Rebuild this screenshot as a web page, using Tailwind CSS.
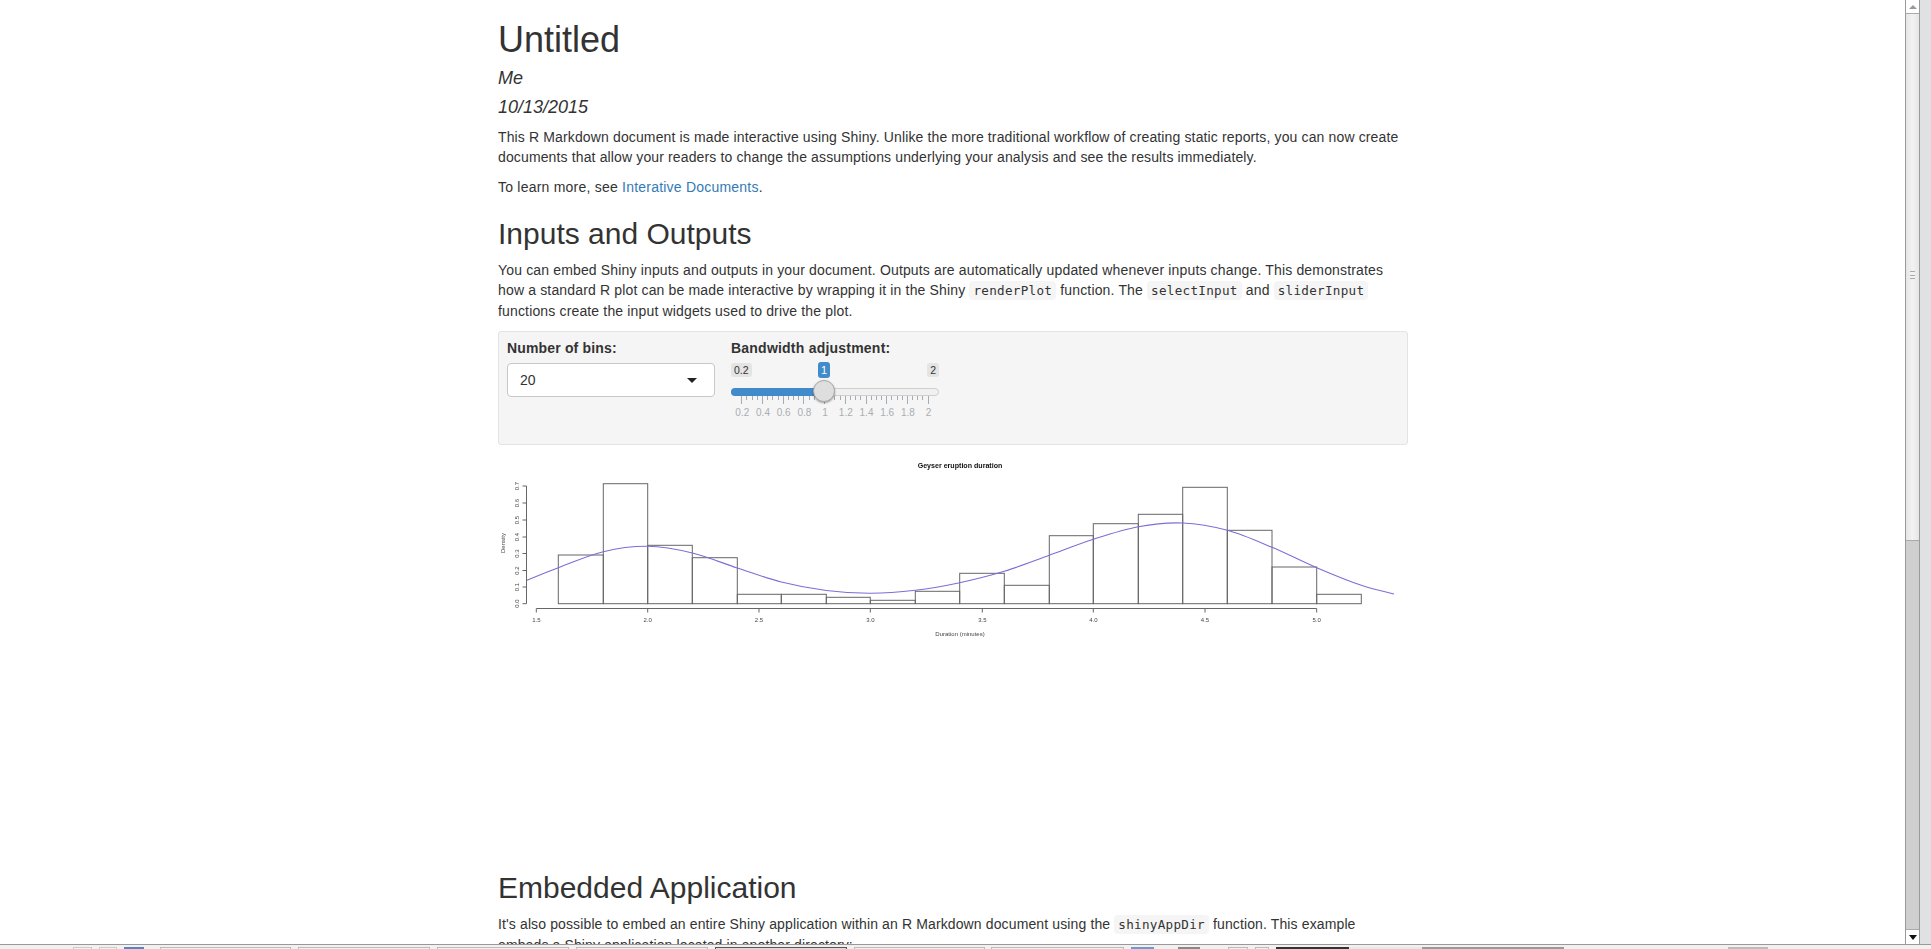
<!DOCTYPE html>
<html lang="en">
<head>
    <meta charset="UTF-8">
    <meta name="viewport" content="width=device-width, initial-scale=1.0">
    <title>Untitled</title>
    <script src="https://cdn.jsdelivr.net/npm/@tailwindcss/browser@4"></script>
</head>
<body class="h-[949px] overflow-hidden bg-white font-['Liberation_Sans',Arial,sans-serif] text-[14px] leading-[20px] text-[#333]">
    <div class="flex h-[944px]">
        <!-- document -->
        <main class="h-full w-[1905px] shrink-0 overflow-hidden pl-[498px]">
            <div class="w-[910px]">
                <h1 class="mt-5 mb-[9px] text-[36px] leading-[39.6px]">Untitled</h1>
                <h4 class="mb-[10px] text-[18px] leading-[19.8px] italic">Me</h4>
                <h4 class="mb-[9px] text-[18px] leading-[19.8px] italic">10/13/2015</h4>
                <p class="mb-[10px] tracking-[0.135px]">This R Markdown document is made interactive using Shiny. Unlike the more traditional workflow of creating static reports, you can now create documents that allow your readers to change the assumptions underlying your analysis and see the results immediately.</p>
                <p class="mb-[10px] tracking-[0.22px]">To learn more, see <a href="#" class="text-[#337ab7]">Interative Documents</a>.</p>

                <h2 class="mt-5 mb-[10px] text-[30px] leading-[33px]">Inputs and Outputs</h2>
                <p class="mb-[10px] tracking-[0.155px]">You can embed Shiny inputs and outputs in your document. Outputs are automatically updated whenever inputs change. This demonstrates how a standard R plot can be made interactive by wrapping it in the Shiny <code class="rounded bg-[#f5f5f5] px-1 py-0.5 font-['DejaVu_Sans_Mono',monospace] text-[12.6px] tracking-[0.3px]">renderPlot</code> function. The <code class="rounded bg-[#f5f5f5] px-1 py-0.5 font-['DejaVu_Sans_Mono',monospace] text-[12.6px] tracking-[0.3px]">selectInput</code> and <code class="rounded bg-[#f5f5f5] px-1 py-0.5 font-['DejaVu_Sans_Mono',monospace] text-[12.6px] tracking-[0.3px]">sliderInput</code> functions create the input widgets used to drive the plot.</p>

                <!-- input panel -->
                <div class="flex h-[114px] gap-4 rounded-[3px] border border-[#e3e3e3] bg-[#f5f5f5] px-2 pt-[6px]">
                    <div class="w-[208px]">
                        <label class="mb-[5px] block font-bold tracking-[0.16px]">Number of bins:</label>
                        <div class="flex h-[34px] items-center justify-between rounded border border-[#c8c8c8] bg-white pr-[17px] pl-3">
                            <span>20</span>
                            <span class="h-0 w-0 border-x-[5px] border-t-[5px] border-x-transparent border-t-[#222]"></span>
                        </div>
                    </div>
                    <div class="w-[208px]">
                        <label class="mb-[5px] block font-bold tracking-[0.22px]">Bandwidth adjustment:</label>
                        <div class="relative h-[54px]">
                            <span class="absolute top-0 left-0 rounded-[3px] bg-[#e4e4e4] px-[3px] text-[10.5px] leading-[14px]">0.2</span>
                            <span class="absolute top-0 right-0 rounded-[3px] bg-[#e4e4e4] px-[3px] text-[10.5px] leading-[14px]">2</span>
                            <span class="absolute top-[-1px] left-[87px] w-[12px] rounded-[3px] bg-[#428bca] text-center text-[11px] leading-[16px] text-white">1</span>
                            <div class="absolute top-[25px] h-2 w-full rounded-full border border-[#cfcfcf] bg-[#f0f0f0]"></div>
                            <div class="absolute top-[25px] h-2 w-[93px] rounded-l-full bg-[#428bca]"></div>
                            <svg class="absolute top-[32px] left-0" width="208" height="24" viewBox="731 394 208 24">
                                <g id="sliderTicks" stroke="#a4abb2" stroke-width="1"></g>
                                <g id="sliderLabels" fill="#aaaeb2" font-size="10" text-anchor="middle" font-family="Liberation Sans"></g>
                            </svg>
                            <div class="absolute top-[17px] left-[82px] h-[22px] w-[22px] rounded-full border border-[#a9a9a9] bg-[#dedede] shadow-[0_1px_2px_rgba(0,0,0,0.35)]"></div>
                        </div>
                    </div>
                </div>

                <!-- plot, drawn in page coordinates -->
                <div class="h-[406px] pt-[6px]">
                    <svg class="block blur-[0.3px]" width="910" height="200" viewBox="498 450 910 200" font-family="Liberation Sans" fill="#333">
                        <text x="960" y="466.5" text-anchor="middle" font-size="7.1" font-weight="bold" fill="#111">Geyser eruption duration</text>
                        <g id="bars" fill="none" stroke="#666" stroke-width="1"></g>
                        <path id="density" fill="none" stroke="#7b6fd6" stroke-width="1.1"></path>
                        <g stroke="#666" stroke-width="1" fill="none">
                            <path d="M536.3 607.5H1316.7M536.3 607.5v4M647.7 607.5v4M759 607.5v4M870.3 607.5v4M982.3 607.5v4M1093.3 607.5v4M1205 607.5v4M1316.7 607.5v4"></path>
                            <path d="M526.5 485V602.7M526.5 485h-4M526.5 502h-4M526.5 519h-4M526.5 536h-4M526.5 552.5h-4M526.5 569.5h-4M526.5 586h-4M526.5 602.7h-4"></path>
                        </g>
                        <g font-size="6" text-anchor="middle" fill="#444">
                            <text x="536.3" y="620.8">1.5</text>
                            <text x="647.7" y="620.8">2.0</text>
                            <text x="759" y="620.8">2.5</text>
                            <text x="870.3" y="620.8">3.0</text>
                            <text x="982.3" y="620.8">3.5</text>
                            <text x="1093.3" y="620.8">4.0</text>
                            <text x="1205" y="620.8">4.5</text>
                            <text x="1316.7" y="620.8">5.0</text>
                            <text x="960" y="634.8">Duration (minutes)</text>
                            <text transform="translate(518.8 602.7) rotate(-90)">0.0</text>
                            <text transform="translate(518.8 586) rotate(-90)">0.1</text>
                            <text transform="translate(518.8 569.5) rotate(-90)">0.2</text>
                            <text transform="translate(518.8 552.5) rotate(-90)">0.3</text>
                            <text transform="translate(518.8 536) rotate(-90)">0.4</text>
                            <text transform="translate(518.8 519) rotate(-90)">0.5</text>
                            <text transform="translate(518.8 502) rotate(-90)">0.6</text>
                            <text transform="translate(518.8 485) rotate(-90)">0.7</text>
                            <text transform="translate(505 542) rotate(-90)">Density</text>
                        </g>
                    </svg>
                </div>

                <h2 class="mt-5 mb-[10px] text-[30px] leading-[33px]">Embedded Application</h2>
                <p class="tracking-[0.125px]">It's also possible to embed an entire Shiny application within an R Markdown document using the <code class="rounded bg-[#f5f5f5] px-1 py-0.5 font-['DejaVu_Sans_Mono',monospace] text-[12.6px] tracking-[0.3px]">shinyAppDir</code> function. This example embeds a Shiny application located in another directory:</p>
            </div>
        </main>

        <!-- scrollbar -->
        <div class="flex h-full w-[15px] shrink-0 flex-col border-x border-[#9a9a9a]">
            <div class="flex h-[14px] items-center justify-center border-b border-[#aaa] bg-white">
                <span class="h-0 w-0 border-x-[4px] border-b-[4px] border-x-transparent border-b-[#999]"></span>
            </div>
            <div class="flex h-[527px] items-start justify-center border-b border-[#aaa] bg-gradient-to-r from-[#e6e6e6] via-[#f2f2f2] to-[#e6e6e6] pt-[257px]">
                <div class="h-[8px] w-[5px] border-y border-[#aaa] bg-[linear-gradient(#f2f2f2_3px,#aaa_3px,#aaa_4px,#f2f2f2_4px)]"></div>
            </div>
            <div class="flex-1 bg-[#cfcfcf]"></div>
            <div class="flex h-[15px] items-center justify-center border-t border-[#aaa] bg-white">
                <span class="h-0 w-0 border-x-[4px] border-t-[5px] border-x-transparent border-t-[#111]"></span>
            </div>
        </div>
        <div class="h-full w-[11px] shrink-0 bg-[#e0e1e3]"></div>
    </div>

    <!-- sliver of the desktop task bar -->
    <div class="flex h-[5px] items-start gap-[7px] overflow-hidden border-t border-[#999] bg-[#f1f1f1] pt-[2px] pl-[73px]">
        <div class="h-3 w-[19px] shrink-0 border border-[#ccc]"></div>
        <div class="h-3 w-[18px] shrink-0 border border-[#ccc]"></div>
        <div class="h-3 w-5 shrink-0 bg-[#5b82c4]"></div>
        <div class="ml-[9px] h-3 w-[131px] shrink-0 border border-[#bbb]"></div>
        <div class="h-3 w-[132px] shrink-0 border border-[#bbb]"></div>
        <div class="h-3 w-[132px] shrink-0 border border-[#bbb]"></div>
        <div class="h-3 w-[132px] shrink-0 border border-[#bbb]"></div>
        <div class="h-3 w-[132px] shrink-0 border border-[#555] bg-[#ddd]"></div>
        <div class="h-3 w-[131px] shrink-0 border border-[#bbb]"></div>
        <div class="-ml-[1px] h-3 w-[133px] shrink-0 border border-[#bbb]"></div>
        <div class="h-3 w-[23px] shrink-0 bg-[#6d9ad0]"></div>
        <div class="ml-[17px] h-3 w-[22px] shrink-0 bg-[#888]"></div>
        <div class="ml-[21px] h-3 w-5 shrink-0 border border-[#bbb]"></div>
        <div class="h-3 w-[14px] shrink-0 border border-[#bbb]"></div>
        <div class="h-3 w-[73px] shrink-0 bg-[#333]"></div>
        <div class="-ml-[7px] h-3 w-[73px] shrink-0 bg-[#e8e8e8]"></div>
        <div class="-ml-[7px] h-3 w-[71px] shrink-0 bg-[#9a9a9a]"></div>
        <div class="-ml-[7px] h-3 w-[71px] shrink-0 bg-[#9a9a9a]"></div>
        <div class="ml-[157px] h-3 w-10 shrink-0 bg-[#bdbdbd]"></div>
    </div>

    <script>
        const edges = [558.3, 603.3, 647.7, 692.3, 737.3, 781.3, 826.3, 870.3, 915.3, 959.7, 1004.3, 1049.3, 1093.3, 1138.3, 1182.7, 1227.3, 1272, 1316.7, 1361.3];
        const tops = [554, 482.7, 544.3, 556.7, 593.3, 593.3, 596.3, 599.3, 590.3, 572.3, 584.3, 534.7, 522.7, 513.3, 486.3, 529.3, 566, 593.3];
        const baseline = 602.7;
        const svgNS = 'http://www.w3.org/2000/svg';

        // histogram
        const bars = document.getElementById('bars');
        tops.forEach((top, i) => {
            const rect = document.createElementNS(svgNS, 'rect');
            rect.setAttribute('x', edges[i]);
            rect.setAttribute('y', top);
            rect.setAttribute('width', edges[i + 1] - edges[i]);
            rect.setAttribute('height', baseline - top);
            bars.appendChild(rect);
        });

        // density curve, read off the plot at the bin edges and smoothed (Catmull-Rom)
        const pts = [[526.7,579.3],[558.3,566.7],[603.3,550.7],[647.7,545.3],[692.3,552],[737.3,567],[781.3,581],[826.3,589.5],[870.3,592.3],[915.3,589.3],[959.7,581.7],[1004.3,570.3],[1049.3,554.3],[1093.3,538.3],[1138.3,525.7],[1182.7,522],[1227.3,529.3],[1272,546.3],[1316.7,566.7],[1361.3,584.3],[1394,593]];
        let d = `M${pts[0][0]} ${pts[0][1]}`;
        for (let i = 0; i < pts.length - 1; i++) {
            const p0 = pts[Math.max(i - 1, 0)], p1 = pts[i], p2 = pts[i + 1], p3 = pts[Math.min(i + 2, pts.length - 1)];
            d += ` C${p1[0] + (p2[0] - p0[0]) / 6} ${p1[1] + (p2[1] - p0[1]) / 6} ${p2[0] - (p3[0] - p1[0]) / 6} ${p2[1] - (p3[1] - p1[1]) / 6} ${p2[0]} ${p2[1]}`;
        }
        document.getElementById('density').setAttribute('d', d);

        // slider ticks: 4 subdivisions per labelled step
        const ticks = document.getElementById('sliderTicks');
        const labels = document.getElementById('sliderLabels');
        const names = ['0.2', '0.4', '0.6', '0.8', '1', '1.2', '1.4', '1.6', '1.8', '2'];
        const x0 = 741.3, step = 20.7;
        let tickPath = '';
        for (let i = 0; i <= 36; i++) {
            const x = Math.round(x0 + i * step / 4) + 0.5;
            tickPath += `M${x} 395v${i % 4 === 0 ? 8 : 4}`;
        }
        const tickEl = document.createElementNS(svgNS, 'path');
        tickEl.setAttribute('d', tickPath);
        ticks.appendChild(tickEl);
        names.forEach((name, i) => {
            const t = document.createElementNS(svgNS, 'text');
            t.setAttribute('x', x0 + i * step + 1);
            t.setAttribute('y', 415);
            t.textContent = name;
            labels.appendChild(t);
        });
    </script>
</body>
</html>
